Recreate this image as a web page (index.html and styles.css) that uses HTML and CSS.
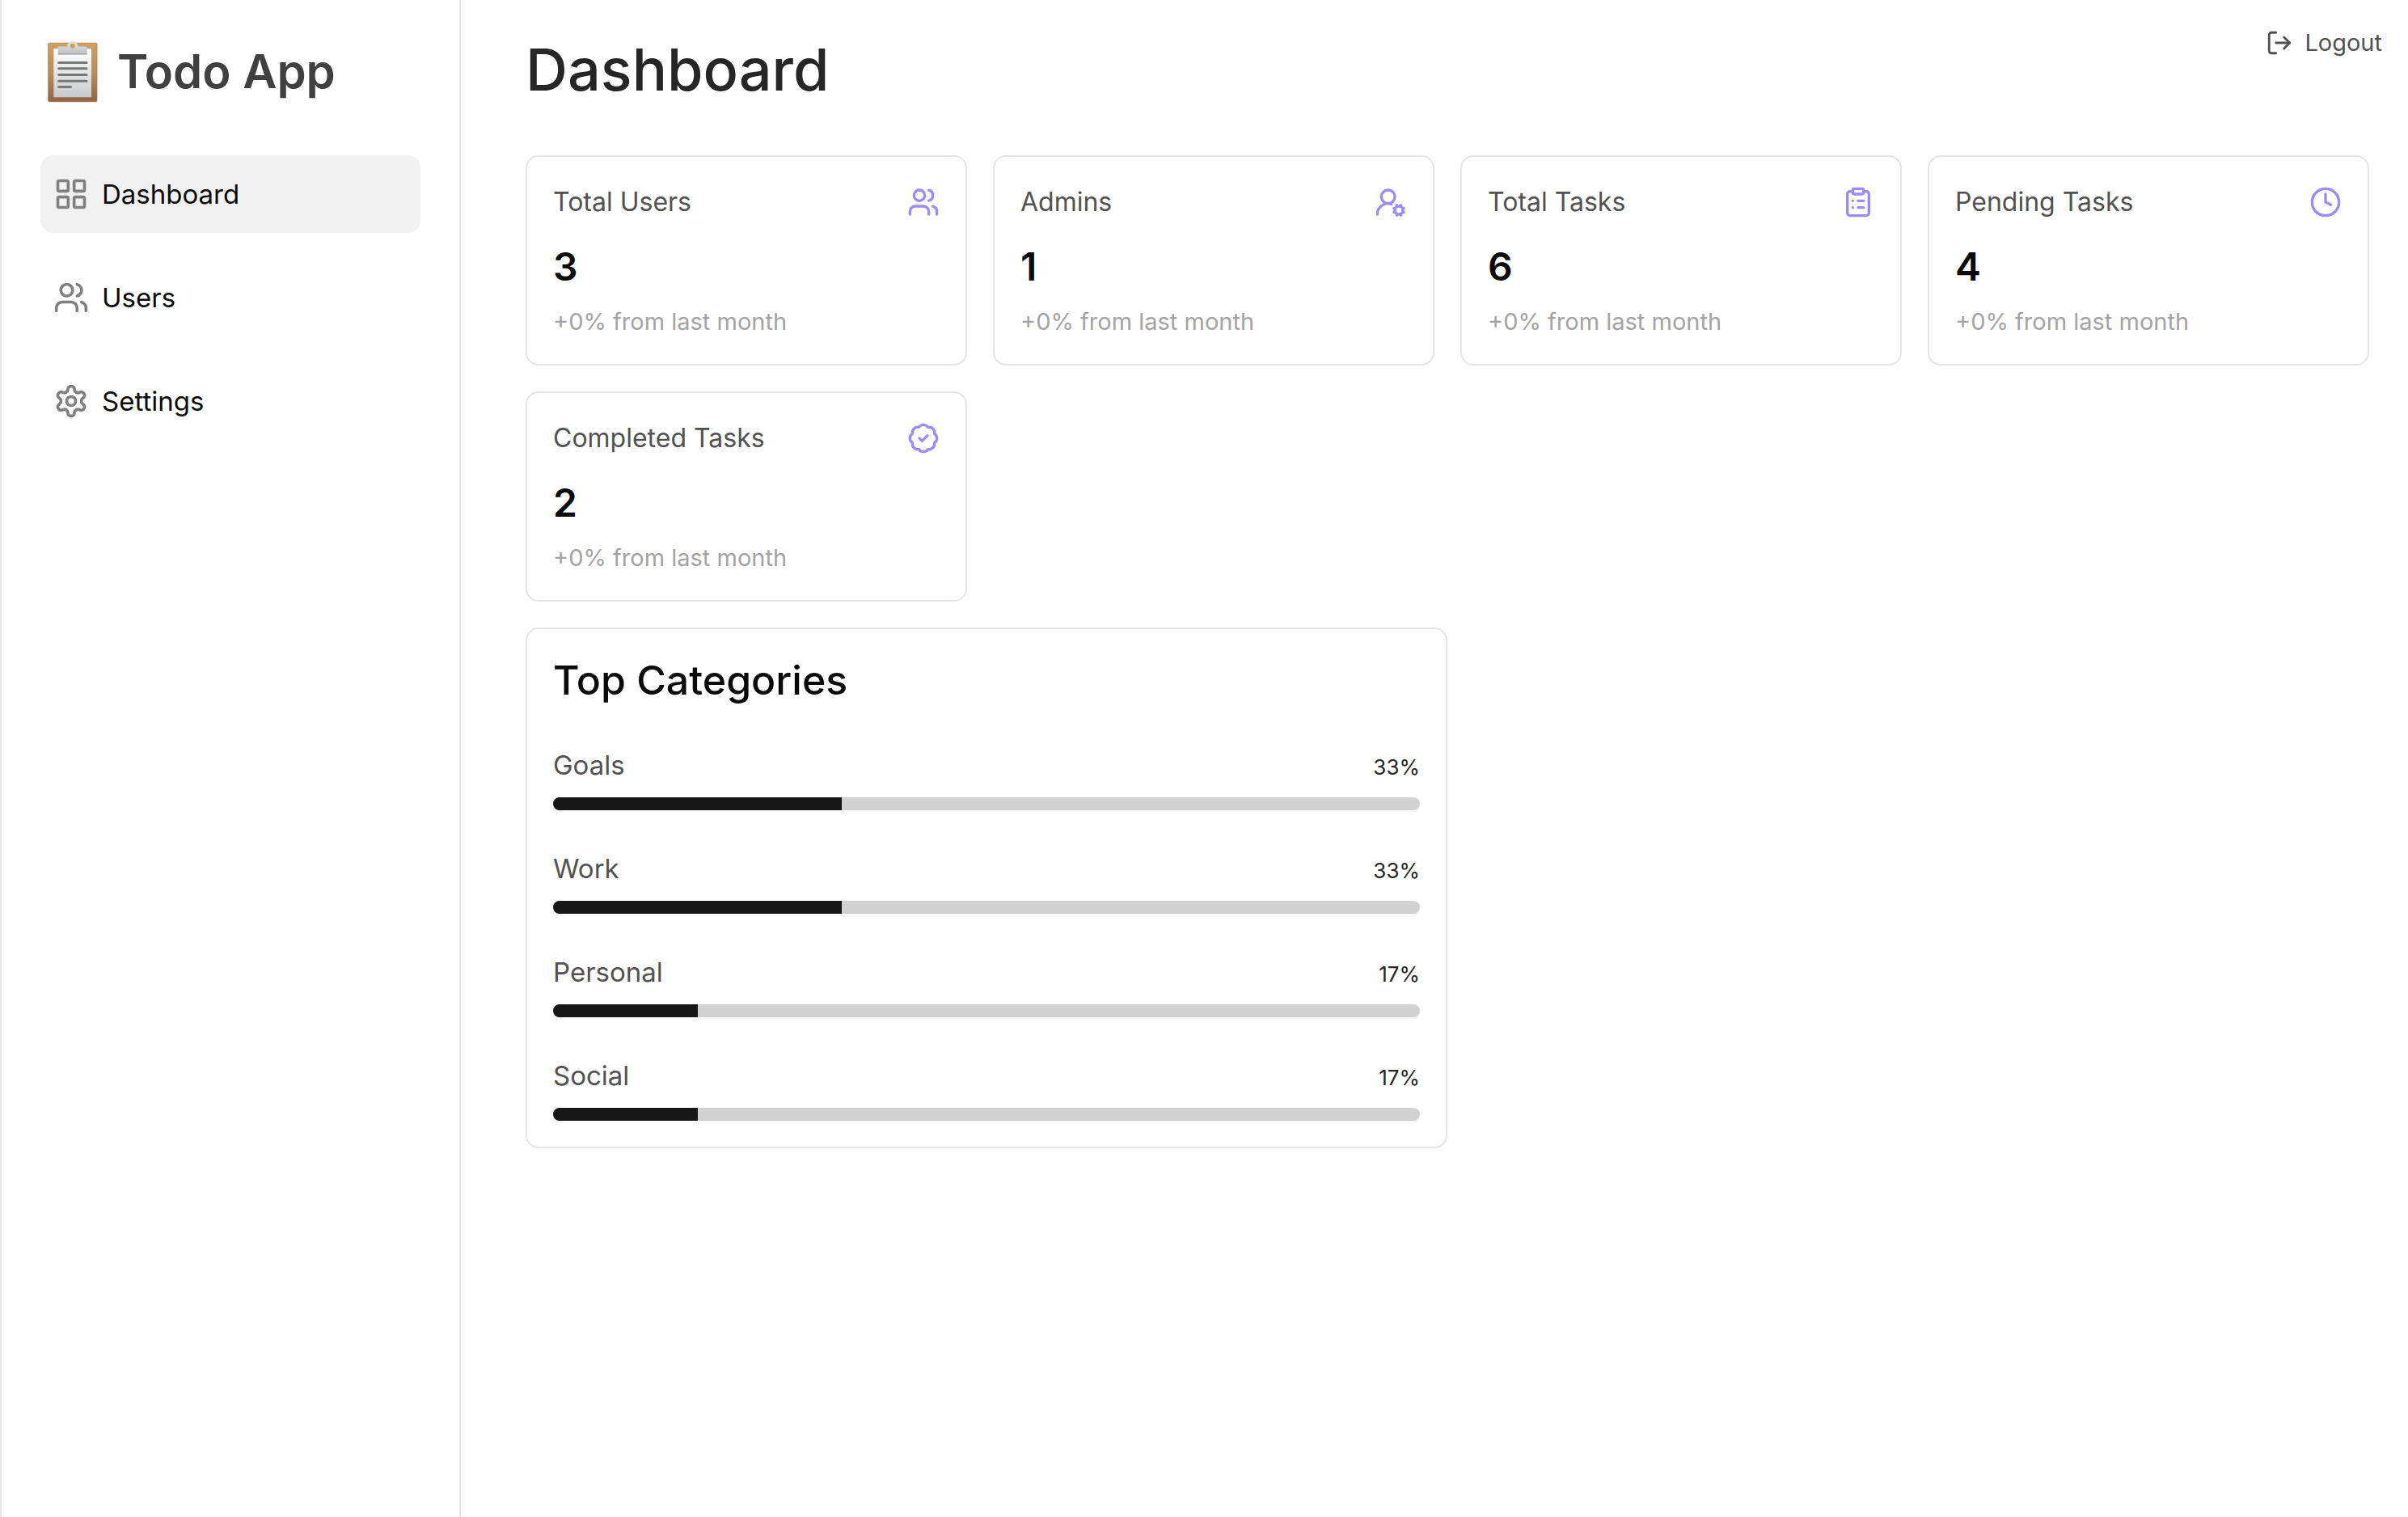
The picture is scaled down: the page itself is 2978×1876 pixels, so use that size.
FILE: index.html
```html
<!DOCTYPE html>
<html lang="en">
<head>
<meta charset="utf-8">
<meta name="viewport" content="width=device-width, initial-scale=1">
<title>Dashboard - Todo App</title>
<link rel="stylesheet" href="styles.css">
</head>
<body>
<svg class="sprite" aria-hidden="true">
  <symbol id="i-users" viewBox="0 0 24 24"><path d="M16 21v-2a4 4 0 0 0-4-4H6a4 4 0 0 0-4 4v2"/><circle cx="9" cy="7" r="4"/><path d="M22 21v-2a4 4 0 0 0-3-3.87"/><path d="M16 3.13a4 4 0 0 1 0 7.75"/></symbol>
</svg>
<div class="app">
  <aside class="sidebar">
    <div class="brand">
      <svg class="brand-logo" viewBox="58 60 186 230" aria-hidden="true">
        <defs>
          <linearGradient id="board" x1="0" y1="0" x2="0" y2="1"><stop offset="0" stop-color="#cfa063"/><stop offset=".5" stop-color="#b98d5c"/><stop offset="1" stop-color="#906543"/></linearGradient>
          <linearGradient id="paper" x1="0" y1="0" x2="0" y2="1"><stop offset="0" stop-color="#ffffff"/><stop offset="1" stop-color="#c8cacb"/></linearGradient>
          <linearGradient id="clip" x1="0" y1="0" x2="0" y2="1"><stop offset="0" stop-color="#e6e6e8"/><stop offset="1" stop-color="#bcbdbf"/></linearGradient>
        </defs>
        <rect x="60" y="71" width="181" height="217" rx="4" fill="#9b9490"/>
        <rect x="60" y="69" width="181" height="217" rx="4" fill="url(#board)" stroke="#a67b4e" stroke-width="2"/>
        <rect x="80" y="90" width="140" height="180" rx="2" fill="url(#paper)"/>
        <path d="M96 82h34a20 20 0 0 1 40 0h34v30H96z" fill="url(#clip)"/>
        <path d="M96 110h108" stroke="#97989a" stroke-width="3"/>
        <circle cx="150" cy="80" r="9" fill="#cda062"/>
        <path d="M99 142h103M99 164h103M99 187h103M99 210h103M99 232h44" stroke="#777" stroke-width="9" stroke-linecap="round"/>
      </svg>
      <span class="brand-name">Todo App</span>
    </div>
    <nav class="nav">
      <a class="nav-item is-active" href="#dashboard" aria-current="page">
        <svg class="icon" viewBox="0 0 24 24" aria-hidden="true"><rect width="7" height="7" x="3" y="3" rx="1"/><rect width="7" height="7" x="14" y="3" rx="1"/><rect width="7" height="7" x="14" y="14" rx="1"/><rect width="7" height="7" x="3" y="14" rx="1"/></svg>
        Dashboard
      </a>
      <a class="nav-item" href="#users">
        <svg class="icon" aria-hidden="true"><use href="#i-users"/></svg>
        Users
      </a>
      <a class="nav-item" href="#settings">
        <svg class="icon" viewBox="0 0 24 24" aria-hidden="true"><path d="M12.22 2h-.44a2 2 0 0 0-2 2v.18a2 2 0 0 1-1 1.73l-.43.25a2 2 0 0 1-2 0l-.15-.08a2 2 0 0 0-2.73.73l-.22.38a2 2 0 0 0 .73 2.73l.15.1a2 2 0 0 1 1 1.72v.51a2 2 0 0 1-1 1.74l-.15.09a2 2 0 0 0-.73 2.73l.22.38a2 2 0 0 0 2.73.73l.15-.08a2 2 0 0 1 2 0l.43.25a2 2 0 0 1 1 1.73V20a2 2 0 0 0 2 2h.44a2 2 0 0 0 2-2v-.18a2 2 0 0 1 1-1.73l.43-.25a2 2 0 0 1 2 0l.15.08a2 2 0 0 0 2.73-.73l.22-.39a2 2 0 0 0-.73-2.73l-.15-.08a2 2 0 0 1-1-1.74v-.5a2 2 0 0 1 1-1.74l.15-.09a2 2 0 0 0 .73-2.73l-.22-.38a2 2 0 0 0-2.73-.73l-.15.08a2 2 0 0 1-2 0l-.43-.25a2 2 0 0 1-1-1.73V4a2 2 0 0 0-2-2z"/><circle cx="12" cy="12" r="3"/></svg>
        Settings
      </a>
    </nav>
  </aside>

  <main class="main">
    <header class="topbar">
      <h1 class="page-title">Dashboard</h1>
      <button class="logout" type="button">
        <svg class="icon" viewBox="0 0 24 24" aria-hidden="true"><path d="M9 21H5a2 2 0 0 1-2-2V5a2 2 0 0 1 2-2h4"/><path d="m16 17 5-5-5-5"/><path d="M21 12H9"/></svg>
        Logout
      </button>
    </header>

    <div class="content">
      <section class="stats" aria-label="Statistics">
        <article class="card">
          <div class="card-head">
            <h2 class="card-title">Total Users</h2>
            <svg class="icon" aria-hidden="true"><use href="#i-users"/></svg>
          </div>
          <p class="card-value">3</p>
          <p class="card-note">+0% from last month</p>
        </article>
        <article class="card">
          <div class="card-head">
            <h2 class="card-title">Admins</h2>
            <svg class="icon" viewBox="0 0 24 24" aria-hidden="true"><path d="M2 21a8 8 0 0 1 10.434-7.62"/><circle cx="10" cy="8" r="5"/><circle cx="18" cy="18" r="3"/><path d="m19.5 14.3-.4.9"/><path d="m16.9 20.8-.4.9"/><path d="m21.7 19.5-.9-.4"/><path d="m15.2 16.9-.9-.4"/><path d="m21.7 16.5-.9.4"/><path d="m15.2 19.1-.9.4"/><path d="m19.5 21.7-.4-.9"/><path d="m16.9 15.2-.4-.9"/></svg>
          </div>
          <p class="card-value">1</p>
          <p class="card-note">+0% from last month</p>
        </article>
        <article class="card">
          <div class="card-head">
            <h2 class="card-title">Total Tasks</h2>
            <svg class="icon" viewBox="0 0 24 24" aria-hidden="true"><rect width="8" height="4" x="8" y="2" rx="1"/><path d="M16 4h2a2 2 0 0 1 2 2v14a2 2 0 0 1-2 2H6a2 2 0 0 1-2-2V6a2 2 0 0 1 2-2h2"/><path d="M12 11h4"/><path d="M12 16h4"/><path d="M8 11h.01"/><path d="M8 16h.01"/></svg>
          </div>
          <p class="card-value">6</p>
          <p class="card-note">+0% from last month</p>
        </article>
        <article class="card">
          <div class="card-head">
            <h2 class="card-title">Pending Tasks</h2>
            <svg class="icon" viewBox="0 0 24 24" aria-hidden="true"><circle cx="12" cy="12" r="10"/><path d="M12 6v6l4 2"/></svg>
          </div>
          <p class="card-value">4</p>
          <p class="card-note">+0% from last month</p>
        </article>
        <article class="card">
          <div class="card-head">
            <h2 class="card-title">Completed Tasks</h2>
            <svg class="icon" viewBox="0 0 24 24" aria-hidden="true"><path d="M3.85 8.62a4 4 0 0 1 4.78-4.77 4 4 0 0 1 6.74 0 4 4 0 0 1 4.78 4.78 4 4 0 0 1 0 6.74 4 4 0 0 1-4.77 4.78 4 4 0 0 1-6.75 0 4 4 0 0 1-4.78-4.77 4 4 0 0 1 0-6.76Z"/><path d="m9 12 2 2 4-4"/></svg>
          </div>
          <p class="card-value">2</p>
          <p class="card-note">+0% from last month</p>
        </article>
      </section>

      <section class="card categories">
        <h2 class="categories-title">Top Categories</h2>
        <ul class="category-list">
          <li class="category">
            <div class="category-row"><label for="cat-goals">Goals</label><span class="category-share">33%</span></div>
            <progress class="bar" id="cat-goals" value="2" max="6"></progress>
          </li>
          <li class="category">
            <div class="category-row"><label for="cat-work">Work</label><span class="category-share">33%</span></div>
            <progress class="bar" id="cat-work" value="2" max="6"></progress>
          </li>
          <li class="category">
            <div class="category-row"><label for="cat-personal">Personal</label><span class="category-share">17%</span></div>
            <progress class="bar" id="cat-personal" value="1" max="6"></progress>
          </li>
          <li class="category">
            <div class="category-row"><label for="cat-social">Social</label><span class="category-share">17%</span></div>
            <progress class="bar" id="cat-social" value="1" max="6"></progress>
          </li>
        </ul>
      </section>
    </div>
  </main>
</div>
</body>
</html>
```
FILE: styles.css
```css
*,
*::before,
*::after {
  box-sizing: border-box;
}

body {
  margin: 0;
  font-family: Inter, "Open Sans", sans-serif;
  font-size: 32px;
  line-height: 48px;
  color: #0a0a0a;
  background: #fff;
}

h1,
h2,
p,
ul {
  margin: 0;
  padding: 0;
}

.sprite {
  display: none;
}

.icon {
  flex: none;
  width: 40px;
  height: 40px;
  fill: none;
  stroke: currentColor;
  stroke-width: 2;
  stroke-linecap: round;
  stroke-linejoin: round;
}

.app {
  display: flex;
  min-height: 100vh;
}

/* Sidebar */

.sidebar {
  flex: 0 0 570px;
  padding: 48px;
  border: solid #e5e5e5;
  border-width: 0 2px;
}

.brand {
  display: flex;
  align-items: center;
  gap: 24px;
  height: 80px;
  margin-bottom: 64px;
  padding-left: 9px;
}

.brand-logo {
  width: 62px;
  height: 77px;
}

.brand-name {
  font-size: 58px;
  font-weight: 600;
  line-height: 76px;
  color: #404040;
}

.nav {
  display: flex;
  flex-direction: column;
  gap: 32px;
}

.nav-item {
  display: flex;
  align-items: center;
  gap: 16px;
  padding: 24px 16px;
  border-radius: 16px;
  font-size: 33px;
  color: inherit;
  text-decoration: none;
}

.nav-item.is-active {
  background: #f1f1f1;
}

.nav-item .icon {
  width: 44px;
  height: 44px;
  color: #808080;
}

/* Main area */

.main {
  flex: 1;
  min-width: 0;
}

.topbar {
  display: flex;
  justify-content: space-between;
  align-items: flex-start;
  padding: 32px 32px 52px 80px;
}

.page-title {
  font-size: 72px;
  font-weight: 500;
  line-height: 108px;
  color: #262626;
}

.logout {
  display: flex;
  align-items: center;
  gap: 14px;
  padding: 0;
  border: 0;
  background: none;
  font: inherit;
  font-size: 29px;
  line-height: 42px;
  color: #525252;
  cursor: pointer;
}

.logout .icon {
  width: 34px;
  height: 34px;
}

.content {
  display: flex;
  flex-direction: column;
  gap: 32px;
  padding: 0 48px 48px 80px;
}

.stats {
  display: grid;
  grid-template-columns: repeat(4, 1fr);
  gap: 32px;
}

.card {
  padding: 32px;
  border: 2px solid #e5e5e5;
  border-radius: 16px;
}

.card-head {
  display: flex;
  justify-content: space-between;
  align-items: center;
  color: #9f8afb;
}

.card-title {
  font-size: 32px;
  font-weight: 400;
  color: #525252;
}

.card-value {
  margin: 22px 0 14px;
  font-size: 48px;
  font-weight: 600;
  line-height: 68px;
}

.card-note {
  font-size: 29px;
  line-height: 40px;
  color: #a3a3a3;
}

/* Top categories */

.categories {
  width: 50%;
}

.categories-title {
  margin-bottom: 52px;
  font-size: 50px;
  font-weight: 500;
  line-height: 62px;
}

.category-list {
  display: flex;
  flex-direction: column;
  gap: 50px;
  list-style: none;
}

.category {
  display: flex;
  flex-direction: column;
  gap: 18px;
}

.category-row {
  display: flex;
  justify-content: space-between;
  align-items: baseline;
  font-size: 33px;
  line-height: 44px;
  color: #525252;
}

.category-share {
  font-size: 26px;
  line-height: 36px;
  color: #262626;
}

.bar {
  appearance: none;
  display: block;
  width: 100%;
  height: 16px;
  border: 0;
  border-radius: 8px;
  overflow: hidden;
  background: #d1d1d1;
}

.bar::-webkit-progress-bar {
  background: #d1d1d1;
}

.bar::-webkit-progress-value {
  background: #171717;
}

.bar::-moz-progress-bar {
  background: #171717;
}
```
